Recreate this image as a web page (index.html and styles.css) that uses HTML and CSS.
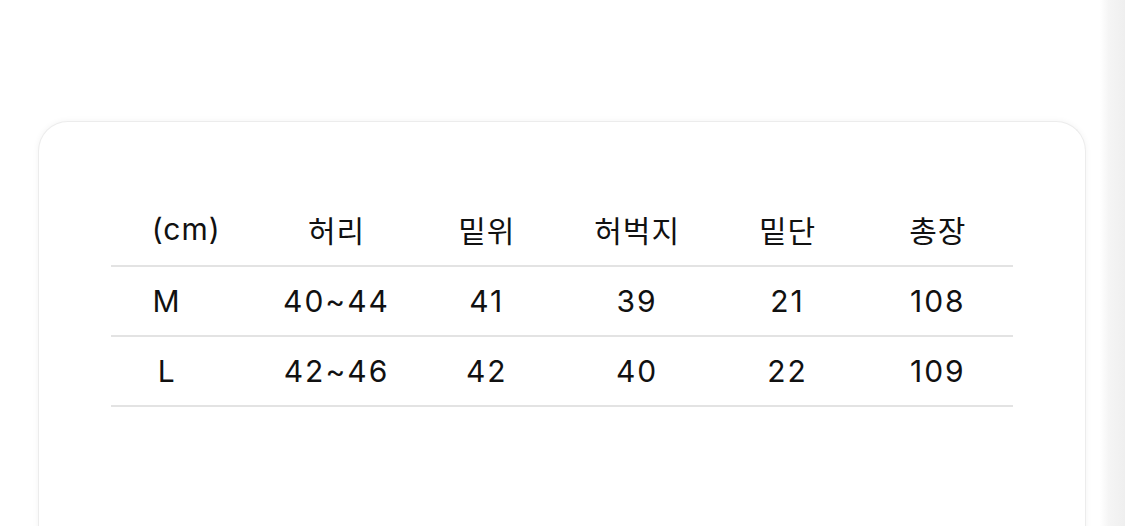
FILE: index.html
```html
<!DOCTYPE html>
<html lang="ko">
<head>
<meta charset="utf-8">
<title>사이즈</title>
<link rel="stylesheet" href="styles.css">
</head>
<body>
<div class="page">
  <main class="main">
    <section class="card">
      <table class="size-table">
        <thead>
          <tr><th>(cm)</th><th>허리</th><th>밑위</th><th>허벅지</th><th>밑단</th><th>총장</th></tr>
        </thead>
        <tbody>
          <tr><td class="size">M</td><td>40~44</td><td>41</td><td>39</td><td>21</td><td>108</td></tr>
          <tr><td class="size">L</td><td>42~46</td><td>42</td><td>40</td><td>22</td><td>109</td></tr>
        </tbody>
      </table>
    </section>
  </main>
  <div class="edge"></div>
</div>
</body>
</html>
```
FILE: styles.css
```css
html, body {
  margin: 0;
  padding: 0;
  background: #ffffff;
}
.page {
  display: flex;
  width: 1125px;
  height: 526px;
  overflow: hidden;
}
.main {
  flex: 1;
  padding: 121px 14px 0 38px;
  box-sizing: border-box;
}
.edge {
  width: 25px;
  background: linear-gradient(to right, #ffffff 0%, #f5f5f5 35%, #efefef 100%);
}
.card {
  background: #fff;
  border: 1.5px solid #ececec;
  border-bottom: none;
  border-radius: 30px 30px 0 0;
  box-shadow: 0 0 6px rgba(0, 0, 0, 0.05);
  padding: 73px 72px 0 72px;
  height: 420px;
  box-sizing: border-box;
}
.size-table {
  width: 100%;
  border-collapse: collapse;
  table-layout: fixed;
  font-family: Inter, "Noto Sans CJK KR", sans-serif;
  color: #111111;
}
.size-table th,
.size-table td {
  text-align: center;
  font-weight: 400;
  font-size: 30px;
  letter-spacing: 2px;
  height: 68px;
  padding: 0;
  border-bottom: 2px solid #e3e3e3;
}
.size-table th {
  letter-spacing: 1px;
  padding-bottom: 2px;
}
.size-table td.size {
  padding-right: 38px;
}
```
